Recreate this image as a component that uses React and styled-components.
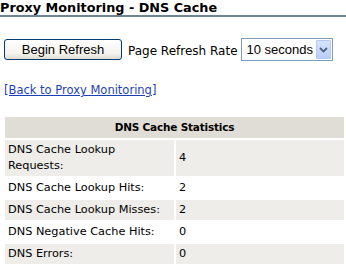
import React from "react";
import styled, { createGlobalStyle } from "styled-components";

const GlobalStyle = createGlobalStyle`
  body {
    margin: 0;
    background: #ffffff;
    font-family: "DejaVu Sans", Tahoma, sans-serif;
  }
`;

const stats = [
  { label: "DNS Cache Lookup Requests:", value: 4 },
  { label: "DNS Cache Lookup Hits:", value: 2 },
  { label: "DNS Cache Lookup Misses:", value: 2 },
  { label: "DNS Negative Cache Hits:", value: 0 },
  { label: "DNS Errors:", value: 0 },
];

export default function App() {
  return (
    <>
      <GlobalStyle />
      <Title>Proxy Monitoring - DNS Cache</Title>
      <Content>
        <Toolbar>
          <Button>Begin Refresh</Button>
          <Label>Page Refresh Rate</Label>
          <SelectWrap>
            <Select defaultValue="10">
              <option value="10">10 seconds</option>
              <option value="30">30 seconds</option>
              <option value="60">60 seconds</option>
            </Select>
            <Arrow>
              <svg width="9" height="6" viewBox="0 0 9 6">
                <path d="M1 1 L4.5 4.5 L8 1" fill="none" stroke="#4d6185" strokeWidth="1.8" />
              </svg>
            </Arrow>
          </SelectWrap>
        </Toolbar>
        <BackLink href="#">[Back to Proxy Monitoring]</BackLink>
      </Content>
      <Table>
        <colgroup>
          <col width="169" />
          <col />
        </colgroup>
        <thead>
          <tr>
            <HeadCell colSpan={2}>DNS Cache Statistics</HeadCell>
          </tr>
        </thead>
        <tbody>
          {stats.map((s, i) => (
            <tr key={s.label}>
              <Cell $shaded={i % 2 === 0}>{s.label}</Cell>
              <Cell $shaded={i % 2 === 0}>{s.value}</Cell>
            </tr>
          ))}
        </tbody>
      </Table>
    </>
  );
}

const Title = styled.h1`
  margin: 0;
  padding: 1px 0 0 0;
  font-size: 12.8px;
  font-weight: bold;
  line-height: 14px;
  color: #000;
  border-bottom: 2px solid #6f8596;
`;

const Content = styled.div`
  padding: 21px 0 0 4px;
`;

const Toolbar = styled.div`
  display: flex;
  align-items: center;
  height: 23px;
`;

const Button = styled.button`
  width: 118px;
  height: 21px;
  margin: 0;
  padding: 0;
  font-family: "Liberation Sans", Arial, sans-serif;
  font-size: 13px;
  color: #000;
  border: 1px solid #003c74;
  border-radius: 3px;
  background: linear-gradient(#ffffff, #f4f3ee 70%, #dedcd1);
`;

const Label = styled.span`
  margin: 3px 0 0 6px;
  font-size: 12px;
  color: #000;
`;

const SelectWrap = styled.div`
  position: relative;
  margin-left: 3px;
  width: 92px;
  height: 23px;
`;

const Select = styled.select`
  appearance: none;
  width: 100%;
  height: 100%;
  margin: 0;
  padding: 0 0 0 5px;
  font-family: "Liberation Sans", Arial, sans-serif;
  font-size: 13px;
  color: #000;
  background: #fff;
  border: 1px solid #7f9db9;
  border-radius: 0;
  outline: none;
`;

const Arrow = styled.span`
  position: absolute;
  top: 2px;
  right: 2px;
  width: 15px;
  height: 19px;
  display: flex;
  align-items: center;
  justify-content: center;
  background: linear-gradient(#d7e3fd, #b9cdfa);
  border: 1px solid #b5c8f2;
  box-sizing: border-box;
  border-radius: 1px;
  pointer-events: none;
`;

const BackLink = styled.a`
  display: inline-block;
  margin-top: 22px;
  font-size: 11.5px;
  line-height: 14px;
  color: #1c3fb5;
  text-decoration: underline;
`;

const Table = styled.table`
  margin: 17px 0 0 3px;
  width: 343px;
  table-layout: fixed;
  border-spacing: 2px;
  border-collapse: separate;
  font-size: 11.3px;
  color: #000;
`;

const HeadCell = styled.th`
  background: #e0ddd6;
  padding: 2px 3px;
  line-height: 17px;
  font-size: 10.5px;
  letter-spacing: -0.2px;
  font-weight: bold;
  text-align: center;
`;

const Cell = styled.td`
  padding: 2px 4px 2px 3px;
  line-height: 16px;
  background: ${(p) => (p.$shaded ? "#eeede9" : "#ffffff")};
`;
